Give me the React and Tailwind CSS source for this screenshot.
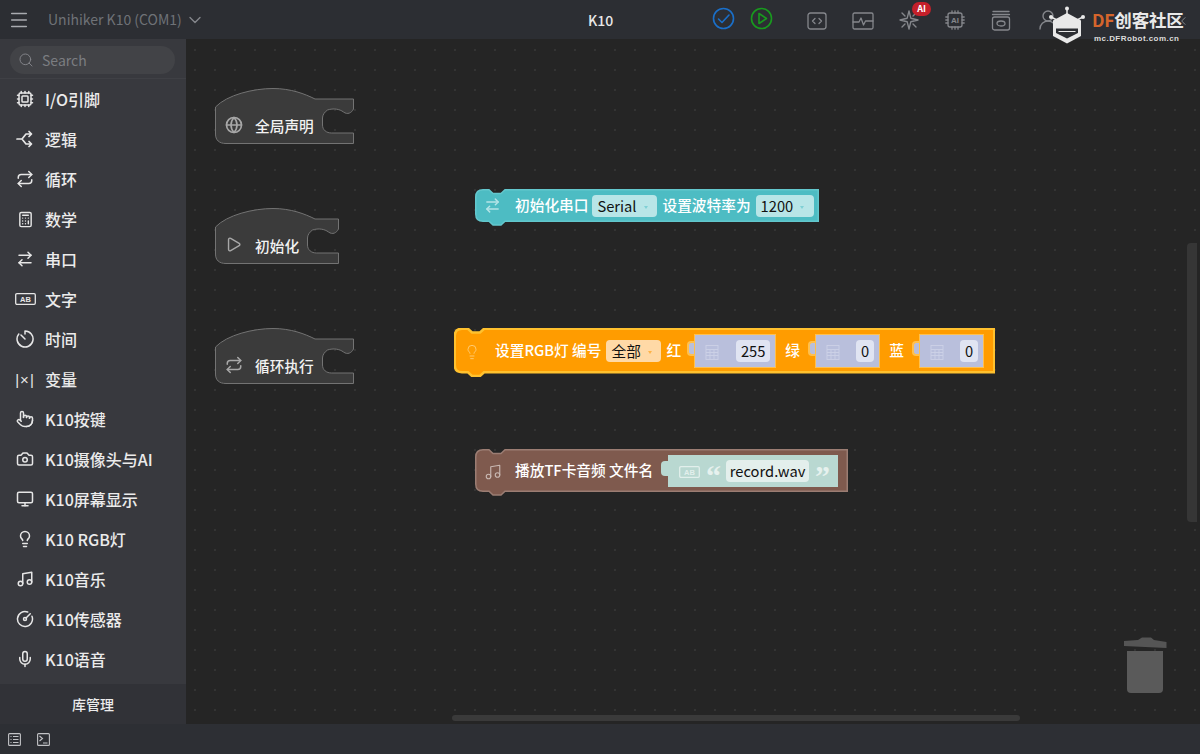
import React from "react";
import { Cpu, Repeat, Calculator, ArrowRightLeft, Pointer, Camera, Monitor, Lightbulb, Music, CircleGauge, Mic, Search, Menu, ChevronDown, UserRound, ChevronsLeft, Globe, Play } from "lucide-react";

const cjk = "font-['Noto_Sans_CJK_SC','Noto_Sans',sans-serif]";

const LogicIcon = () => (
  <svg width="18" height="18" viewBox="0 0 18 18" fill="none" stroke="currentColor" strokeWidth="1.7" strokeLinecap="round" strokeLinejoin="round">
    <path d="M1 9h5l4-5h5M6 9l4 5h5M13 1.5 15.500 4 13 6.500M13 11.500l2.500 2.500-2.500 2.500" />
  </svg>
);
const AbIcon = ({ className = "" }) => (
  <svg width="21" height="12" viewBox="0 0 21 12" fill="none" className={className}>
    <rect x="0.7" y="0.7" width="19.6" height="10.6" rx="1.2" stroke="currentColor" strokeWidth="1.3" />
    <text x="10.5" y="8.9" textAnchor="middle" fontSize="7.5" fontWeight="700" fill="currentColor" fontFamily="Liberation Sans">AB</text>
  </svg>
);
const TimerIcon = () => (
  <svg width="18" height="18" viewBox="0 0 18 18" fill="none" stroke="currentColor" strokeWidth="1.5" strokeLinecap="round">
    <path d="M9 1a8 8 0 1 1-6.200 3M9 9 5 5M9 1v3" />
  </svg>
);
const VarIcon = () => (
  <span className="text-[15px] leading-none tracking-[1px] font-['Liberation_Sans',sans-serif]">|×|</span>
);

const items = [
  ["I/O引脚", <Cpu size={18} />],
  ["逻辑", <LogicIcon />],
  ["循环", <Repeat size={18} />],
  ["数学", <Calculator size={17} />],
  ["串口", <ArrowRightLeft size={18} />],
  ["文字", <AbIcon />],
  ["时间", <TimerIcon />],
  ["变量", <VarIcon />],
  ["K10按键", <Pointer size={18} />],
  ["K10摄像头与AI", <Camera size={18} />],
  ["K10屏幕显示", <Monitor size={18} />],
  ["K10 RGB灯", <Lightbulb size={18} />],
  ["K10音乐", <Music size={18} />],
  ["K10传感器", <CircleGauge size={18} />],
  ["K10语音", <Mic size={18} />],
];

const Header = () => (
  <header className={`h-[39px] shrink-0 bg-[#2c2e33] flex items-center relative z-10 ${cjk}`}>
    <Menu size={22} strokeWidth={1.6} className="ml-[8px] text-[#a9abb0]" />
    <span className="ml-[18px] text-[14px] text-[#6f7277]">Unihiker K10 (COM1)</span>
    <ChevronDown size={20} strokeWidth={1.6} className="ml-[3px] text-[#85878c]" />
    <span className="absolute left-[588px] top-[10px] text-[14px] leading-[20px] font-medium text-[#e8e8e8]">K10</span>

    <div className="absolute left-[712px] top-[7px] flex items-center gap-[15px]">
      <svg width="23" height="23" viewBox="0 0 23 23" fill="none" stroke="#1a6fc9" strokeWidth="1.6" strokeLinecap="round" strokeLinejoin="round"><circle cx="11.5" cy="11.5" r="10" /><path d="m6.500 12 3.500 3.500 7-7.500" /></svg>
      <svg width="23" height="23" viewBox="0 0 23 23" fill="none" stroke="#189a1e" strokeWidth="1.6" strokeLinejoin="round"><circle cx="11.5" cy="11.5" r="10" /><path d="M9 6.500v10l7.500-5z" /></svg>
    </div>

    <div className="absolute left-[807px] top-[12px] text-[#85878c]">
      <svg width="20" height="18" viewBox="0 0 20 18" fill="none" stroke="currentColor" strokeWidth="1.3" strokeLinecap="round" strokeLinejoin="round"><rect x="1" y="1" width="18" height="16" rx="2.500" /><path d="M8 6.500 5.500 9 8 11.500M12 6.500l2.500 2.500-2.500 2.500" /></svg>
    </div>
    <div className="absolute left-[852px] top-[12px] text-[#85878c]">
      <svg width="22" height="18" viewBox="0 0 22 18" fill="none" stroke="currentColor" strokeWidth="1.3" strokeLinecap="round" strokeLinejoin="round"><rect x="1" y="1" width="20" height="16" rx="1.500" /><path d="M1 10h6l2-4 2.500 7L13.500 9H21" /></svg>
    </div>
    <div className="absolute left-[898px] top-[9px] text-[#85878c]">
      <svg width="22" height="22" viewBox="0 0 22 22" fill="none" stroke="currentColor" strokeWidth="1.4" strokeLinejoin="round" strokeLinecap="round"><path d="M11 2 12.800 9.200 20 11 12.800 12.800 11 20 9.200 12.800 2 11 9.200 9.200Z" /><path d="M4 4l3 3M18 4l-3 3M4 18l3-3M18 18l-3-3" /></svg>
    </div>
    <span className="absolute left-[912px] top-[2px] w-[19px] h-[14px] rounded-full bg-[#c4202a] text-white text-[9px] leading-[14px] font-bold text-center">AI</span>
    <div className="absolute left-[945px] top-[10px] text-[#85878c]">
      <svg width="20" height="20" viewBox="0 0 20 20" fill="none" stroke="currentColor" strokeWidth="1.3" strokeLinecap="round"><rect x="3" y="3" width="14" height="14" rx="2" /><path d="M7 .8V3M10 .8V3M13 .8V3M7 17v2.200M10 17v2.200M13 17v2.200M.8 7H3M.8 10H3M.8 13H3M17 7h2.200M17 10h2.200M17 13h2.200" /><text x="10" y="13" textAnchor="middle" fontSize="8" fontWeight="700" stroke="none" fill="currentColor" fontFamily="Liberation Sans">AI</text></svg>
    </div>
    <div className="absolute left-[991px] top-[10px] text-[#85878c]">
      <svg width="20" height="21" viewBox="0 0 20 21" fill="none" stroke="currentColor" strokeWidth="1.3" strokeLinecap="round"><path d="M2 1.500h16M1.500 4.500h17" /><rect x="1.500" y="7" width="17" height="13" rx="2" /><ellipse cx="10" cy="13.500" rx="4" ry="2.500" /></svg>
    </div>
    <UserRound size={24} strokeWidth={1.4} className="absolute left-[1036px] top-[8px] text-[#85878c]" />
    <ChevronsLeft size={16} strokeWidth={1.5} className="absolute left-[1173px] top-[13px] text-[#85878c]" />

    <svg width="38" height="38" viewBox="0 0 38 38" className="absolute left-[1048px] top-[6px]">
      <path d="M19 2v6M3 11l6 3M35 11l-6 3" stroke="#e9e9e9" strokeWidth="1.500" />
      <circle cx="19" cy="2.500" r="2" fill="#e9e9e9" /><circle cx="3" cy="11" r="2" fill="#e9e9e9" /><circle cx="35" cy="11" r="2" fill="#e9e9e9" />
      <path d="M19 7 33 14.500V30L19 37.500 5 30V14.500Z" fill="#e9e9e9" />
      <path d="M8 22.500H30V27L19 32.500 8 27Z" fill="#2c2e33" />
      <path d="M10.500 25.500h17" stroke="#e9e9e9" strokeWidth="1" />
    </svg>
    <div className="absolute left-[1092px] top-[8px] flex flex-col items-start">
      <span className="text-[17.5px] leading-[23px] font-bold text-[#e9e9e9] tracking-[-0.2px]"><span className="text-[#d5652c]">DF</span>创客社区</span>
      <span className="mt-[2px] ml-[2px] text-[8px] leading-[11px] font-bold text-[#dcdcdc] tracking-[0.45px] font-['Liberation_Sans',sans-serif]">mc.DFRobot.com.cn</span>
    </div>
  </header>
);

const Sidebar = () => (
  <aside className={`w-[186px] shrink-0 bg-[#38393e] flex flex-col ${cjk}`}>
    <div className="h-[40px] shrink-0 border-b border-[#3f4045] px-[10px] pt-[7px]">
      <div className="h-[28px] w-[165px] rounded-full bg-[#424347] flex items-center pl-[8px]">
        <Search size={16} strokeWidth={1.4} className="text-[#85878c]" />
        <span className="ml-[8px] text-[14px] text-[#7b7d81]">Search</span>
      </div>
    </div>
    <nav className="flex-1 flex flex-col">
      {items.map(([label, icon]) => (
        <div key={label} className="h-[40px] shrink-0 flex items-center text-[#ebebeb]">
          <span className="w-[45px] pl-[5px] flex items-center justify-center shrink-0 text-[#e6e6e6]">{icon}</span>
          <span className="text-[16px] font-medium leading-[40px]">{label}</span>
        </div>
      ))}
    </nav>
    <div className="h-[40px] shrink-0 bg-[#313237] flex items-center justify-center text-[14px] font-medium text-[#ebebeb]">库管理</div>
  </aside>
);

const HatShape = ({ w }) => {
  const r = w - 1.5;
  const n = r - 31;
  return (
    <svg width={w} height="57" viewBox={`0 0 ${w} 57`} className="absolute left-0 top-0">
      <path
        d={`M.5 19 C12 7 38 .5 58 .5 C76 .5 90 6 100 11 H${r} V21 C${r - 2} 25 ${r - 6} 27 ${r - 10} 24 C${r - 14} 21 ${r - 20} 20 ${n + 5} 22 C${n + 2} 24 ${n} 27 ${n} 30 V37 C${n} 42 ${n + 4} 45 ${n + 9} 45 H${r} V55.500 H11 C4 55.500 .5 52 .5 46 Z`}
        fill="#3b3b3b"
        stroke="#737373"
        strokeWidth="1"
      />
    </svg>
  );
};

const Hat = ({ top, w, label, icon }) => (
  <div className={`absolute left-[29px] ${top} ${w === 140 ? "w-[140px]" : "w-[125px]"} h-[57px] ${cjk}`}>
    <HatShape w={w} />
    <span className="absolute left-[10px] top-[28px] text-[#a8a8a8]">{icon}</span>
    <span className="absolute left-[40px] top-[27px] text-[14.7px] leading-[22px] font-medium text-[#f2f2f2]">{label}</span>
  </div>
);

const stack = (w, h) =>
  `M8 .75H14L18 4.500H26L30 .75H${w - 0.75}V${h - 0.75}H30L26 ${h + 3}H18L14 ${h - 0.75}H8Q.75 ${h - 0.75} .75 ${h - 8}V8Q.75 .75 8 .75Z`;

const Dropdown = ({ className, arrow, children }) => (
  <span className={`h-[22px] rounded-[4px] flex items-center text-[14.7px] leading-[22px] text-[#111] ${className}`}>
    {children}
    <span className={`ml-[7px] mt-[3px] w-0 h-0 border-x-[2.500px] border-x-transparent border-t-[3.500px] ${arrow}`} />
  </span>
);

const CalcGlyph = ({ className }) => (
  <svg width="14" height="15" viewBox="0 0 14 15" fill="none" stroke="currentColor" strokeWidth="0.9" className={className}>
    <rect x="1" y=".5" width="12" height="14" /><path d="M1 4.500h12M1 7.500h12M1 10.500h12M5 4.500v10M9 4.500v10" />
  </svg>
);

const ValueBlock = ({ w, field, value }) => (
  <div className="relative h-[34px] ml-[6px] flex items-center" style={{ width: w }}>
    <span className="absolute left-[-7px] top-[7px] w-[8px] h-[15px] rounded-l-[4px] bg-[#b9bfdc] border-y-[2px] border-l-[2px] border-[#ffc04d]" />
    <div className="absolute inset-0 bg-[#b9bfdc] border border-[#ffc04d]" />
    <CalcGlyph className="relative ml-[11px] mt-[3px] text-[#cdd1e6]" />
    <span className="relative ml-auto mr-[6px] h-[22px] rounded-[4px] bg-[#e0e4f2] text-[14.7px] leading-[22px] text-[#111] text-center" style={{ width: field }}>{value}</span>
  </div>
);

const Trash = () => (
  <div className="absolute left-[938px] top-[598px] w-[42px] flex flex-col items-center">
    <svg width="43" height="12" viewBox="0 0 43 12"><path d="M0 4 14 3 18 .5H27L30 3 42.500 5V11L0 9Z" fill="#555" /></svg>
    <div className="mt-[2px] w-[36px] h-[42px] bg-[#5a5a5a] rounded-b-[4px]" />
  </div>
);

const Canvas = () => (
  <main className={`relative flex-1 bg-[#252525] bg-[radial-gradient(circle,#343434_0.7px,transparent_1px)] bg-[size:20px_20px] bg-[position:-1px_1px] overflow-hidden ${cjk}`}>
    <Hat top="top-[49px]" w={140} label="全局声明" icon={<Globe size={18} strokeWidth={2.2} />} />
    <Hat top="top-[169px]" w={125} label="初始化" icon={<Play size={17} strokeWidth={2} />} />
    <Hat top="top-[289px]" w={140} label="循环执行" icon={<Repeat size={18} strokeWidth={2} />} />

    {/* Serial block */}
    <div className="absolute left-[289px] top-[150px] w-[344px] h-[33px] flex items-center">
      <svg width="344" height="37" viewBox="0 0 344 37" className="absolute left-0 top-0"><path d={stack(344, 33)} fill="#4dbcc3" stroke="#63c7cd" strokeWidth="1.500" /></svg>
      <ArrowRightLeft size={17} strokeWidth={2} className="relative ml-[9px] text-[#b5e4e7]" />
      <span className="relative ml-[14px] text-[14.7px] font-medium text-white">初始化串口</span>
      <Dropdown className="relative ml-[4px] w-[65px] pl-[5px] bg-[#b8e5e7]" arrow="border-t-[#7fd0d5]">Serial</Dropdown>
      <span className="relative ml-[5px] text-[14.7px] font-medium text-white">设置波特率为</span>
      <Dropdown className="relative ml-[5px] w-[58px] pl-[5px] bg-[#b8e5e7]" arrow="border-t-[#7fd0d5]">1200</Dropdown>
    </div>

    {/* RGB block */}
    <div className="absolute left-[268px] top-[289px] w-[541px] h-[45px] flex items-center">
      <svg width="541" height="49" viewBox="0 0 541 49" className="absolute left-0 top-0"><path d={stack(541, 45)} fill="#ff9c00" stroke="#ffc12e" strokeWidth="2.500" /></svg>
      <Lightbulb size={16} strokeWidth={1.200} className="relative ml-[10px] mt-[3px] text-[#ffd58c]" />
      <span className="relative ml-[15px] text-[14.7px] font-medium text-white">设置RGB灯 编号</span>
      <Dropdown className="relative ml-[5px] w-[55px] pl-[5px] bg-[#ffd9a6]" arrow="border-t-[#ffb347]">全部</Dropdown>
      <span className="relative ml-[5px] text-[14.7px] font-medium text-white">红</span>
      <div className="relative ml-[7px] flex items-center">
        <ValueBlock w={82} field={34} value="255" />
        <span className="mx-[9px] w-[15px] text-[14.7px] font-medium text-white">绿</span>
        <ValueBlock w={65} field={18} value="0" />
        <span className="mx-[9px] w-[15px] text-[14.7px] font-medium text-white">蓝</span>
        <ValueBlock w={65} field={18} value="0" />
      </div>
    </div>

    {/* Audio block */}
    <div className="absolute left-[289px] top-[410px] w-[373px] h-[43px] flex items-center">
      <svg width="373" height="47" viewBox="0 0 373 47" className="absolute left-0 top-0"><path d={stack(373, 43)} fill="#7f5a4e" stroke="#9b7d73" strokeWidth="1.500" /></svg>
      <Music size={18} strokeWidth={1.500} className="relative ml-[9px] mt-[2px] text-[#c9b8b2]" />
      <span className="relative ml-[13px] text-[14.7px] font-medium text-white">播放TF卡音频 文件名</span>
      <div className="relative ml-[15px] w-[170px] h-[32px] bg-[#b9d8d1] flex items-center">
        <span className="absolute left-[-7px] top-[6px] w-[8px] h-[15px] rounded-l-[4px] bg-[#b9d8d1]" />
        <AbIcon className="ml-[11px] mt-[3px] text-[#e2efec]" />
        <span className="ml-[6px] w-[14px] text-[30px] leading-[22px] mt-[11px] font-bold text-[#e6f1ee] font-['Liberation_Serif',serif]">“</span>
        <span className="ml-[6px] w-[83px] h-[22px] rounded-[4px] bg-[#e3efec] text-center text-[14.7px] leading-[22px] text-[#111]">record.wav</span>
        <span className="ml-[6px] w-[14px] text-[30px] leading-[22px] mt-[11px] font-bold text-[#e6f1ee] font-['Liberation_Serif',serif]">”</span>
      </div>
    </div>

    <Trash />
    <div className="absolute left-[266px] top-[676px] w-[568px] h-[6px] rounded-full bg-[#3a3a3a]" />
    <div className="absolute left-[1001px] top-[204px] w-[10px] h-[279px] rounded-l-[4px] bg-[#363636]" />
  </main>
);

export default function App() {
  return (
    <div className="w-[1200px] h-[754px] flex flex-col overflow-hidden bg-[#252525]">
      <Header />
      <div className="flex flex-1 min-h-0">
        <Sidebar />
        <Canvas />
      </div>
      <footer className="h-[30px] shrink-0 bg-[#2d2f34] flex items-center pl-[8px] gap-[16px] text-[#c2c3c6]">
        <svg width="13" height="13" viewBox="0 0 13 13" fill="none" stroke="currentColor" strokeWidth="1.100"><rect x=".6" y=".6" width="11.800" height="11.800" rx="1" /><path d="M2.500 3.500h1M2.500 6.500h1M2.500 9.500h1M5 3.500h5.500M5 6.500h5.500M5 9.500h5.500" /></svg>
        <svg width="13" height="13" viewBox="0 0 13 13" fill="none" stroke="currentColor" strokeWidth="1.100"><rect x=".6" y=".6" width="11.800" height="11.800" rx="1" /><path d="M2.500 3 5.500 5.500 2.500 8M6 10h4.500" /></svg>
      </footer>
    </div>
  );
}
